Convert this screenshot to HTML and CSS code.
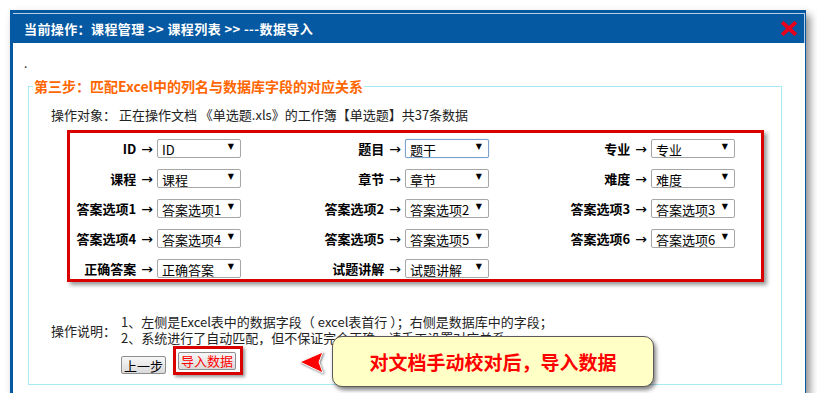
FILE: index.html
```html
<!DOCTYPE html>
<html lang="zh-CN">
<head>
    <meta charset="UTF-8">
    <title>数据导入</title>
    <link rel="stylesheet" href="styles.css">
</head>
<body>

    <!-- Finestra di dialogo -->
    <div class="win">
        <div class="win-head">
            <div class="win-bar">
                <span class="crumb">当前操作：课程管理 &gt;&gt; 课程列表 &gt;&gt; ---数据导入</span>
                <svg class="close" width="16" height="15" viewBox="0 0 16 15">
                    <path d="M2.5 2.5 L13.5 12.5 M13.5 2.5 L2.5 12.5" stroke="#e8001c" stroke-width="3.8" stroke-linecap="square"/>
                </svg>
            </div>
        </div>

        <div class="win-body">
            <div class="dot">.</div>

            <fieldset class="step">
                <legend>第三步：匹配Excel中的列名与数据库字段的对应关系</legend>
                <p class="target">操作对象： 正在操作文档 《单选题.xls》的工作簿【单选题】共37条数据</p>

                <!-- Corrispondenza colonne -->
                <div class="map">
                    <span class="lbl"><b>ID</b><i class="arr">→</i></span>
                    <span class="sel"><select><option>ID</option></select></span>
                    <span class="lbl"><b>题目</b><i class="arr">→</i></span>
                    <span class="sel focus"><select><option>题干</option></select></span>
                    <span class="lbl"><b>专业</b><i class="arr">→</i></span>
                    <span class="sel"><select><option>专业</option></select></span>
                    <span></span>

                    <span class="lbl"><b>课程</b><i class="arr">→</i></span>
                    <span class="sel"><select><option>课程</option></select></span>
                    <span class="lbl"><b>章节</b><i class="arr">→</i></span>
                    <span class="sel"><select><option>章节</option></select></span>
                    <span class="lbl"><b>难度</b><i class="arr">→</i></span>
                    <span class="sel"><select><option>难度</option></select></span>
                    <span></span>

                    <span class="lbl"><b>答案选项1</b><i class="arr">→</i></span>
                    <span class="sel"><select><option>答案选项1</option></select></span>
                    <span class="lbl"><b>答案选项2</b><i class="arr">→</i></span>
                    <span class="sel"><select><option>答案选项2</option></select></span>
                    <span class="lbl"><b>答案选项3</b><i class="arr">→</i></span>
                    <span class="sel"><select><option>答案选项3</option></select></span>
                    <span></span>

                    <span class="lbl"><b>答案选项4</b><i class="arr">→</i></span>
                    <span class="sel"><select><option>答案选项4</option></select></span>
                    <span class="lbl"><b>答案选项5</b><i class="arr">→</i></span>
                    <span class="sel"><select><option>答案选项5</option></select></span>
                    <span class="lbl"><b>答案选项6</b><i class="arr">→</i></span>
                    <span class="sel"><select><option>答案选项6</option></select></span>
                    <span></span>

                    <span class="lbl"><b>正确答案</b><i class="arr">→</i></span>
                    <span class="sel"><select><option>正确答案</option></select></span>
                    <span class="lbl"><b>试题讲解</b><i class="arr">→</i></span>
                    <span class="sel"><select><option>试题讲解</option></select></span>
                </div>

                <!-- Note -->
                <div class="notes">
                    <span class="notes-label">操作说明：</span>
                    <div class="notes-text">
                        <p>1、左侧是Excel表中的数据字段（ excel表首行 ）；右侧是数据库中的字段；</p>
                        <p>2、系统进行了自动匹配，但不保证完全正确，请手工设置对应关系。</p>
                    </div>
                </div>

                <div class="actions">
                    <button class="btn">上一步</button>
                    <span class="mark"><button class="btn btn-import">导入数据</button></span>
                </div>
            </fieldset>

            <!-- Fumetto -->
            <svg class="pointer" width="28" height="26" viewBox="0 0 28 26">
                <path d="M2 12 L25 2 L21 12 L25 23 Z" fill="#f00" stroke="#fff" stroke-width="1"/>
            </svg>
            <div class="callout">对文档手动校对后，导入数据</div>
        </div>
    </div>

</body>
</html>
```

FILE: styles.css
```css
body {
    margin: 0;
    background: #fff;
    color: #222;
    font-family: "Noto Sans CJK SC", "Microsoft YaHei", sans-serif;
    font-size: 13px;
}
p {
    margin: 0;
}

/* finestra */
.win {
    position: relative;
    margin: 10px 0 0 10px;
    width: 792px;
    height: 383px;
    border-left: 3px solid #0559a2;
    border-right: 1px solid #0559a2;
    background: #fff;
    box-shadow: 4px 5px 8px rgba(0, 0, 0, .45);
}
.win-head {
    background: #0559a2;
    padding-top: 3px;
}
.win-bar {
    height: 29px;
    border-top: 1px solid #b9cde2;
    border-right: 1px solid #b9cde2;
    display: flex;
    align-items: center;
    justify-content: space-between;
    padding: 0 7px 0 11px;
}
.crumb {
    color: #fff;
    font-weight: bold;
    font-size: 13px;
    letter-spacing: .4px;
}
.close {
    display: block;
}

.win-body {
    padding-left: 15px;
}
.dot {
    margin: 14px 0 0 -4px;
    height: 12px;
    line-height: 12px;
    font-size: 12px;
}

/* fieldset passo 3 */
.step {
    margin: 7px 0 0 0;
    width: 754px;
    box-sizing: border-box;
    padding: 0 0 10px 0;
    border: 1px solid #a6eaf6;
}
.step legend {
    margin-left: 4px;
    padding: 0 1px;
    color: #ff6600;
    font-weight: bold;
    font-size: 14px;
    line-height: 20px;
}
.target {
    margin: 10px 0 0 22px;
    line-height: 18px;
}

/* tabella di corrispondenza */
.map {
    margin: 6px 0 0 38px;
    width: 691px;
    border: 3px solid #d90000;
    box-shadow: 3px 3px 4px rgba(0, 0, 0, .4);
    padding: 5px 0 1px;
    display: grid;
    grid-template-columns: 87px 86px 162px 86px 160px 86px 24px;
    grid-auto-rows: 20px;
    row-gap: 10px;
    align-items: center;
}
.lbl {
    text-align: right;
    padding-right: 4px;
    color: #000;
    white-space: nowrap;
}
.arr {
    font-style: normal;
    font-family: "DejaVu Sans", sans-serif;
    font-size: 14px;
    margin-left: 5px;
}
.sel {
    position: relative;
    width: 84px;
    height: 19px;
    box-sizing: border-box;
    border: 1px solid #a6a6a6;
    border-radius: 2px;
    background: #fff;
}
.sel.focus {
    border-color: #7da2ce;
    box-shadow: 0 0 1px #7da2ce;
}
.sel select {
    appearance: none;
    -webkit-appearance: none;
    border: none;
    outline: none;
    background: transparent;
    width: 100%;
    height: 17px;
    padding: 0 0 0 4px;
    font-family: inherit;
    font-size: 13px;
    line-height: 17px;
    color: #000;
}
.sel::after {
    content: "▼";
    position: absolute;
    right: 6px;
    top: 2px;
    font-family: "DejaVu Sans", sans-serif;
    font-size: 8px;
    color: #000;
    pointer-events: none;
}

/* note */
.notes {
    margin: 32px 0 0 22px;
    display: flex;
    align-items: center;
}
.notes-label {
    width: 70px;
}
.notes-text p {
    line-height: 16px;
}
.actions {
    margin: 0 0 0 92px;
    display: flex;
    align-items: flex-end;
    gap: 7px;
}
.btn {
    height: 18px;
    padding: 0 2px;
    border: 1px solid #8d8d8d;
    border-radius: 2px;
    background: linear-gradient(#f7f7f7, #dadada);
    font-family: inherit;
    font-size: 13px;
    line-height: 15px;
    color: #000;
}
.mark {
    display: inline-block;
    border: 3px solid #d90000;
    padding: 2px 4px 2px 2px;
    margin-bottom: -1px;
    box-shadow: 2px 2px 3px rgba(0, 0, 0, .4);
}
.btn-import {
    color: #f00;
}

/* fumetto */
.pointer {
    position: absolute;
    left: 285px;
    top: 340px;
    filter: drop-shadow(1px 1px 1px rgba(0, 0, 0, .5));
}
.callout {
    position: absolute;
    left: 319px;
    top: 326px;
    width: 322px;
    height: 51px;
    box-sizing: border-box;
    border: 1px solid #5a5a5a;
    border-radius: 10px;
    background: #ffffc6;
    box-shadow: 2px 3px 4px rgba(0, 0, 0, .5);
    color: #f00;
    font-weight: bold;
    font-size: 19px;
    line-height: 49px;
    text-align: center;
}
```
